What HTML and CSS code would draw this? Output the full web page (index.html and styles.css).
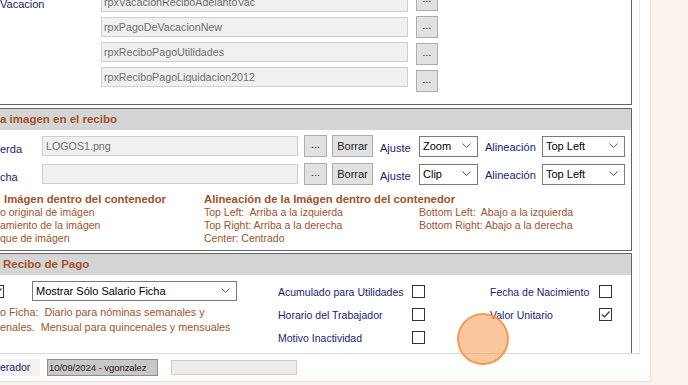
FILE: index.html
```html
<!DOCTYPE html>
<html lang="es">
<head>
    <meta charset="UTF-8">
    <title>Configuración de Recibos</title>
    <link rel="stylesheet" href="styles.css">
</head>
<body>
    <div class="frame">
        <div class="panel">
            <!-- reportes -->
            <div class="group group-reports">
                <div class="files">
                    <div class="file-row">
                        <span class="lbl">Vacacion</span>
                        <div class="field">rpxVacacionReciboAdelantoVac</div>
                    </div>
                    <div class="file-row">
                        <span class="lbl"></span>
                        <div class="field">rpxPagoDeVacacionNew</div>
                    </div>
                    <div class="file-row">
                        <span class="lbl"></span>
                        <div class="field">rpxReciboPagoUtilidades</div>
                    </div>
                    <div class="file-row">
                        <span class="lbl"></span>
                        <div class="field">rpxReciboPagoLiquidacion2012</div>
                    </div>
                </div>
                <div class="dots-col">
                    <div class="btn btn-dots">...</div>
                    <div class="btn btn-dots">...</div>
                    <div class="btn btn-dots">...</div>
                    <div class="btn btn-dots">...</div>
                </div>
            </div>

            <!-- imagen en el recibo -->
            <div class="group group-image">
                <div class="group-head">a imagen en el recibo</div>
                <div class="img-rows">
                    <div class="img-row">
                        <span class="lbl lbl-img">erda</span>
                        <div class="field field-img">LOGOS1.png</div>
                        <div class="btn btn-dots2">...</div>
                        <div class="btn btn-borrar">Borrar</div>
                        <span class="lbl lbl-ajuste">Ajuste</span>
                        <div class="select select-fit">
                            <span>Zoom</span>
                            <svg width="9" height="6" viewBox="0 0 9 6"><path d="M0.5 0.5 L4.5 4.5 L8.5 0.5" fill="none" stroke="#555" stroke-width="1"/></svg>
                        </div>
                        <span class="lbl lbl-alin">Alineación</span>
                        <div class="select select-align">
                            <span>Top Left</span>
                            <svg width="9" height="6" viewBox="0 0 9 6"><path d="M0.5 0.5 L4.5 4.5 L8.5 0.5" fill="none" stroke="#555" stroke-width="1"/></svg>
                        </div>
                    </div>
                    <div class="img-row">
                        <span class="lbl lbl-img">cha</span>
                        <div class="field field-img"></div>
                        <div class="btn btn-dots2">...</div>
                        <div class="btn btn-borrar">Borrar</div>
                        <span class="lbl lbl-ajuste">Ajuste</span>
                        <div class="select select-fit">
                            <span>Clip</span>
                            <svg width="9" height="6" viewBox="0 0 9 6"><path d="M0.5 0.5 L4.5 4.5 L8.5 0.5" fill="none" stroke="#555" stroke-width="1"/></svg>
                        </div>
                        <span class="lbl lbl-alin">Alineación</span>
                        <div class="select select-align">
                            <span>Top Left</span>
                            <svg width="9" height="6" viewBox="0 0 9 6"><path d="M0.5 0.5 L4.5 4.5 L8.5 0.5" fill="none" stroke="#555" stroke-width="1"/></svg>
                        </div>
                    </div>
                </div>
                <div class="legend">
                    <div class="legend-col1">
                        <div class="legend-title legend-title1">Imágen dentro del contenedor</div>
                        <div>o original de imágen</div>
                        <div>amiento de la imágen</div>
                        <div>que de imágen</div>
                    </div>
                    <div class="legend-col2">
                        <div class="legend-title">Alineación de la Imágen dentro del contenedor</div>
                        <div class="legend-grid">
                            <div>Top Left:&nbsp; Arriba a la izquierda</div>
                            <div>Bottom Left:&nbsp; Abajo a la izquierda</div>
                            <div>Top Right: Arriba a la derecha</div>
                            <div>Bottom Right: Abajo a la derecha</div>
                            <div>Center: Centrado</div>
                        </div>
                    </div>
                </div>
            </div>

            <!-- recibo de pago -->
            <div class="group group-receipt">
                <div class="group-head group-head-receipt">Recibo de Pago</div>
                <div class="receipt-body">
                    <div class="receipt-a">
                        <div class="salary-row">
                            <div class="check checked">
                                <svg width="11" height="11" viewBox="0 0 11 11"><path d="M2 5.5 L4.5 8 L9.5 2.5" fill="none" stroke="#333" stroke-width="1.2"/></svg>
                            </div>
                            <div class="select select-salary">
                                <span>Mostrar Sólo Salario Ficha</span>
                                <svg width="9" height="6" viewBox="0 0 9 6"><path d="M0.5 0.5 L4.5 4.5 L8.5 0.5" fill="none" stroke="#555" stroke-width="1"/></svg>
                            </div>
                        </div>
                        <div class="note">
                            <div>o Ficha:&nbsp; Diario para nóminas semanales y</div>
                            <div>enales.&nbsp; Mensual para quincenales y mensuales</div>
                        </div>
                    </div>
                    <div class="receipt-b">
                        <div class="opt-row">
                            <span class="lbl opt-lbl">Acumulado para Utilidades</span>
                            <div class="check"></div>
                        </div>
                        <div class="opt-row">
                            <span class="lbl opt-lbl">Horario del Trabajador</span>
                            <div class="check"></div>
                        </div>
                        <div class="opt-row">
                            <span class="lbl opt-lbl">Motivo Inactividad</span>
                            <div class="check"></div>
                        </div>
                    </div>
                    <div class="receipt-c">
                        <div class="opt-row">
                            <span class="lbl opt-lbl-c">Fecha de Nacimiento</span>
                            <div class="check"></div>
                        </div>
                        <div class="opt-row">
                            <span class="lbl opt-lbl-c">Valor Unitario</span>
                            <div class="check checked">
                                <svg width="11" height="11" viewBox="0 0 11 11"><path d="M2 5.5 L4.5 8 L9.5 2.5" fill="none" stroke="#333" stroke-width="1.2"/></svg>
                            </div>
                        </div>
                    </div>
                </div>
            </div>
        </div>

        <div class="status">
            <div class="status-lbl">erador</div>
            <div class="status-user">10/09/2024 - vgonzalez</div>
            <div class="status-empty"></div>
        </div>
    </div>

    <div class="cursor-dot"></div>
</body>
</html>
```

FILE: styles.css
```css
body {
    margin: 0;
    width: 688px;
    height: 385px;
    overflow: hidden;
    position: relative;
    background-color: #fcf3ee;
    font-family: "Liberation Sans", Arial, sans-serif;
    font-size: 10.5px;
    color: #000;
}
.frame {
    width: 651px;
    height: 382px;
    background-color: #fff;
    border-right: 1px solid #e2e2e2;
    border-bottom: 1px solid #e2e2e2;
    box-sizing: border-box;
    overflow: hidden;
}
.panel {
    width: 640px;
    height: 354px;
    border-right: 1px solid #e4e4e4;
    border-bottom: 1px solid #dadada;
    box-sizing: border-box;
    overflow: hidden;
}
.group {
    width: 632px;
    border: 1px solid #646464;
    border-left: none;
    box-sizing: border-box;
}
.group-head {
    height: 21px;
    line-height: 21px;
    background-color: #d5d5d5;
    color: #a0522d;
    font-weight: bold;
    font-size: 11.5px;
}
.lbl {
    color: #1b1b72;
    white-space: nowrap;
}

/* fields and buttons */
.field {
    height: 20px;
    line-height: 18px;
    box-sizing: border-box;
    border: 1px solid #cfcfcf;
    background-color: #f0f0f0;
    color: #6d6d6d;
    padding-left: 2px;
    font-size: 10.7px;
    white-space: nowrap;
    overflow: hidden;
}
.btn {
    box-sizing: border-box;
    border: 1px solid #adadad;
    background-color: #e1e1e1;
    display: flex;
    align-items: center;
    justify-content: center;
    color: #222;
}
.select {
    box-sizing: border-box;
    border: 1px solid #7a7a7a;
    background-color: #fff;
    display: flex;
    align-items: center;
    justify-content: space-between;
    padding: 0 6px 0 3px;
    font-size: 11px;
}
.check {
    width: 13px;
    height: 13px;
    box-sizing: border-box;
    border: 1px solid #333;
    background-color: #fff;
    display: flex;
    align-items: center;
    justify-content: center;
    flex-shrink: 0;
}

/* group 1 */
.group-reports {
    margin-top: -20px;
    height: 125px;
    border-top: none;
    display: flex;
    align-items: flex-start;
}
.files {
    display: flex;
    flex-direction: column;
    gap: 5px;
    margin-top: 12px;
}
.file-row {
    display: flex;
    align-items: center;
    height: 20px;
}
.file-row .lbl {
    width: 101px;
    font-size: 11px;
    padding-top: 3px;
}
.file-row .field {
    width: 307px;
}
.dots-col {
    display: flex;
    flex-direction: column;
    gap: 5px;
    margin-top: 9px;
    margin-left: 8px;
}
.btn-dots {
    width: 22px;
    height: 22px;
    padding-bottom: 4px;
}

/* group 2 */
.group-image {
    margin-top: 3px;
    height: 143px;
}
.img-rows {
    margin-top: 5px;
    display: flex;
    flex-direction: column;
    gap: 6px;
}
.img-row {
    display: flex;
    align-items: center;
    height: 22px;
}
.lbl-img {
    width: 42px;
    font-size: 11px;
    padding-top: 5px;
}
.field-img {
    width: 256px;
    padding-left: 3px;
}
.btn-dots2 {
    width: 23px;
    height: 22px;
    margin-left: 6px;
    padding-bottom: 4px;
}
.btn-borrar {
    width: 41px;
    height: 22px;
    margin-left: 5px;
    font-size: 11px;
}
.lbl-ajuste {
    width: 39px;
    margin-left: 7px;
    padding-top: 3px;
    font-size: 11px;
}
.select-fit {
    width: 59px;
    height: 21px;
}
.lbl-alin {
    width: 57px;
    margin-left: 7px;
    padding-top: 2px;
    font-size: 11px;
}
.select-align {
    width: 83px;
    height: 21px;
}
.legend {
    display: flex;
    margin-top: 8px;
    color: #a0522d;
    line-height: 13px;
}
.legend-title {
    font-weight: bold;
    font-size: 11.3px;
    white-space: nowrap;
}
.legend-title1 {
    padding-left: 4px;
}
.legend-col1 {
    width: 204px;
}
.legend-grid {
    display: grid;
    grid-template-columns: 215px auto;
}

/* group 3 */
.group-receipt {
    margin-top: 2px;
    height: 110px;
}
.group-head-receipt {
    padding-left: 3px;
}
.receipt-body {
    display: flex;
    align-items: flex-start;
}
.receipt-a {
    width: 278px;
}
.salary-row {
    display: flex;
    align-items: center;
    margin-top: 6px;
}
.salary-row .check {
    margin-left: -9px;
}
.select-salary {
    width: 205px;
    height: 20px;
    margin-left: 28px;
    font-size: 11px;
}
.note {
    margin-top: 4px;
    line-height: 15px;
    color: #a0522d;
    font-size: 10.8px;
    white-space: nowrap;
}
.receipt-b {
    width: 212px;
    margin-top: 5px;
}
.receipt-c {
    margin-top: 5px;
}
.opt-row {
    display: flex;
    align-items: center;
    height: 23px;
}
.opt-lbl {
    width: 134px;
}
.opt-lbl-c {
    width: 109px;
}

/* status bar */
.status {
    height: 27px;
    display: flex;
    align-items: center;
}
.status-lbl {
    width: 40px;
    height: 17px;
    line-height: 17px;
    background-color: #f3f3f3;
    color: #1b1b72;
}
.status-user {
    width: 111px;
    height: 17px;
    line-height: 15px;
    margin-left: 7px;
    box-sizing: border-box;
    border: 1px solid #8d8d8d;
    background-color: #c8c8c8;
    color: #222;
    padding-left: 1px;
    font-size: 9.6px;
    letter-spacing: -0.1px;
    white-space: nowrap;
    overflow: hidden;
}
.status-empty {
    width: 126px;
    height: 15px;
    margin-left: 13px;
    box-sizing: border-box;
    border: 1px solid #cdcdcd;
    background-color: #ececec;
}

/* click highlight over the form */
.cursor-dot {
    position: absolute;
    left: 457px;
    top: 313px;
    width: 52px;
    height: 52px;
    box-sizing: border-box;
    border-radius: 50%;
    border: 2px solid rgba(238, 150, 70, 0.85);
    background-color: rgba(246, 160, 90, 0.6);
}
```
